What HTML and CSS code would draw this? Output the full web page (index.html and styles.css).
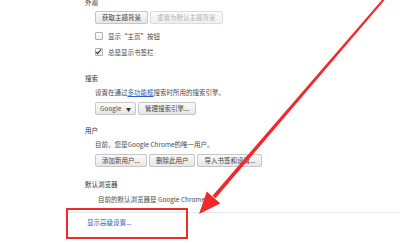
FILE: index.html
```html
<!DOCTYPE html>
<html lang="zh-CN">
<head>
  <meta charset="UTF-8">
  <title>设置</title>
  <link rel="stylesheet" href="styles.css">
</head>
<body>
  <div class="settings">
    <section class="group group-first">
      <h3>外观</h3>
      <div class="group-body">
        <div class="btn-row">
          <button class="btn">获取主题背景</button>
          <button class="btn" disabled>重置为默认主题背景</button>
        </div>
        <label class="check"><span class="box"></span>显示“主页”按钮</label>
        <label class="check check-2"><span class="box checked"></span>总是显示书签栏</label>
      </div>
    </section>

    <section class="group group-search">
      <h3>搜索</h3>
      <div class="group-body">
        <p class="desc">设置在通过<a href="#">多功能框</a>搜索时所用的搜索引擎。</p>
        <div class="btn-row">
          <button class="btn btn-select">Google <span class="caret">▼</span></button>
          <button class="btn">管理搜索引擎...</button>
        </div>
      </div>
    </section>

    <section class="group group-users">
      <h3>用户</h3>
      <div class="group-body">
        <p class="desc">目前，您是Google Chrome的唯一用户。</p>
        <div class="btn-row">
          <button class="btn">添加新用户...</button>
          <button class="btn">删除此用户</button>
          <button class="btn">导入书签和设置...</button>
        </div>
      </div>
    </section>

    <section class="group group-browser">
      <h3>默认浏览器</h3>
      <div class="group-body">
        <p class="desc desc-browser">目前的默认浏览器是 Google Chrome。</p>
      </div>
    </section>
  </div>

  <div class="footer">
    <a href="#">显示高级设置...</a>
  </div>

  <div class="highlight"></div>
  <svg class="arrow" width="400" height="243" viewBox="0 0 400 243">
    <polygon points="385.75,-1.3 384.25,-2.7 212.5,195.7 215.5,198.3" fill="#f02a2a"/>
    <polygon points="199,214 220.3,203.4 206.8,191.6" fill="#f02a2a"/>
  </svg>
</body>
</html>
```

FILE: styles.css
```css
body {
  margin: 0;
  background: #fff;
  font-family: "Noto Sans CJK SC", "Noto Sans", sans-serif;
  font-size: 6.5px;
  color: #4a4a4a;
  width: 400px;
  height: 243px;
  overflow: hidden;
  position: relative;
}
.settings {
  padding-left: 85px;
  margin-top: -3px;
}
h3 {
  margin: 0;
  font-size: 6.5px;
  font-weight: normal;
  line-height: 10px;
  color: #303030;
}
.group-body {
  padding-left: 10px;
}
.group-first .btn-row {
  margin-top: 4px;
}
.group-search {
  margin-top: 16px;
}
.group-users {
  margin-top: 10px;
}
.group-browser {
  margin-top: 12px;
}
.desc {
  margin: 4px 0 0;
  line-height: 10px;
}
.desc-browser {
  margin-top: 5px;
  padding-left: 3px;
}
.desc a {
  color: #2b5fc4;
  text-decoration: underline;
}
.btn-row {
  display: flex;
  gap: 2px;
  margin-top: 5px;
}
.btn {
  height: 13px;
  padding: 0 6px;
  font-family: inherit;
  font-size: 6.5px;
  line-height: 11px;
  color: #444;
  background: linear-gradient(#fafafa, #e6e6e6);
  border: 1px solid #c6c6c6;
  border-radius: 2px;
}
.btn:disabled {
  color: #b4b4b4;
  background: linear-gradient(#fbfbfb, #efefef);
  border-color: #dcdcdc;
}
.btn-select {
  width: 41px;
  padding: 0 4px;
  text-align: left;
  display: flex;
  justify-content: space-between;
  align-items: center;
  color: #555;
}
.caret {
  font-size: 5px;
  color: #333;
}
.check {
  display: flex;
  align-items: center;
  gap: 5px;
  height: 10px;
  margin-top: 7px;
}
.check-2 {
  margin-top: 6px;
}
.box {
  width: 6px;
  height: 6px;
  border: 1px solid #b0b0b0;
  border-radius: 1px;
  background: linear-gradient(#fff, #ececec);
  position: relative;
}
.box.checked::after {
  content: "";
  position: absolute;
  left: 1px;
  top: -1px;
  width: 2px;
  height: 5px;
  border: solid #222;
  border-width: 0 1.5px 1.5px 0;
  transform: rotate(40deg);
}
.footer {
  margin: 8px 0 0 66px;
  border-top: 1px solid #e8e8e8;
  padding: 4px 0 0 21px;
  line-height: 10px;
}
.footer a {
  color: #2b5fc4;
  text-decoration: none;
}
.highlight {
  position: absolute;
  left: 66px;
  top: 208px;
  width: 118px;
  height: 27px;
  border: 2px solid #f02a2a;
}
.arrow {
  position: absolute;
  left: 0;
  top: 0;
}
```
